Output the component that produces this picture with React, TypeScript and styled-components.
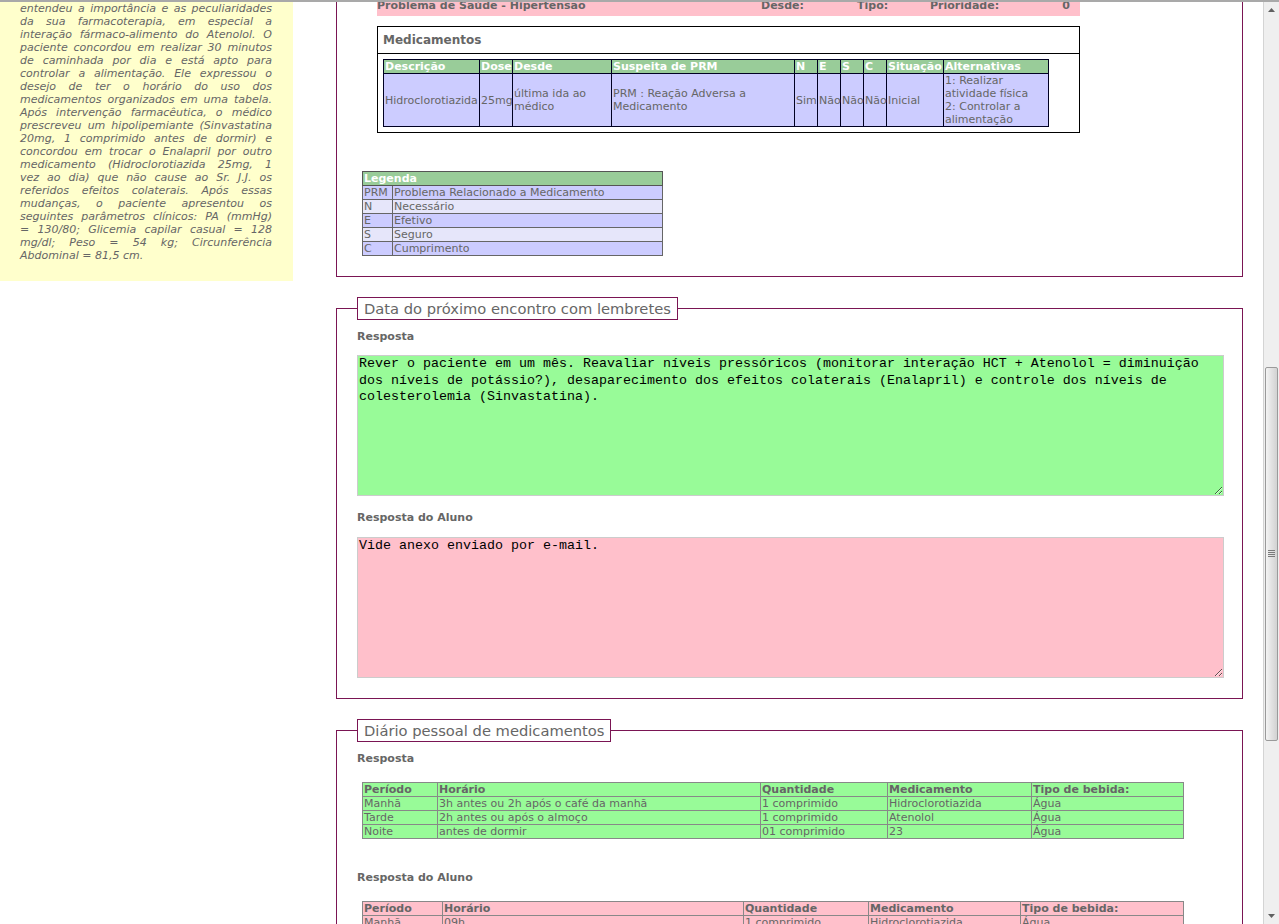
import React from 'react';
import styled, { createGlobalStyle } from 'styled-components';

const Global = createGlobalStyle`
  html, body { margin: 0; padding: 0; background: #fff; overflow: hidden; }
  body {
    font-family: "DejaVu Sans", Verdana, sans-serif;
    font-size: 11px;
    color: #666;
  }
  * { box-sizing: border-box; }
`;

const MAROON = '#7a1553';

const Window = styled.div`
  display: flex;
  width: 1279px;
  height: 924px;
  border-top: 2px solid #a9a9a9;
  overflow: hidden;
`;

const Viewport = styled.div`
  flex: 1;
  display: flex;
  align-items: flex-start;
  overflow: hidden;
`;

const Sidebar = styled.aside`
  flex: none;
  width: 293px;
  background: #ffffcc;
  padding: 0 21px 19px 20px;
  font-style: italic;
  line-height: 13px;
`;

const SideLine = styled.span<{ $last?: boolean }>`
  display: block;
  white-space: nowrap;
  text-align: justify;
  text-align-last: ${(p) => (p.$last ? 'left' : 'justify')};
`;

const Main = styled.main`
  flex: none;
  width: 907px;
  margin-left: 43px;
  display: flex;
  flex-direction: column;
`;

const Box = styled.fieldset<{ $cut?: boolean }>`
  margin: ${(p) => (p.$cut ? '0' : '20px 0 0')};
  min-width: 0;
  border: 1px solid ${MAROON};
  border-top: ${(p) => (p.$cut ? 'none' : `1px solid ${MAROON}`)};
  padding: 0 17px 20px 20px;
`;

const BoxLegend = styled.legend`
  border: 1px solid ${MAROON};
  padding: 0 6px;
  font-size: 14.7px;
  line-height: 21px;
  color: #666;
  background: #fff;
`;

const ProblemRow = styled.div`
  display: grid;
  grid-template-columns: 384px 96px 73px 1fr auto;
  width: 703px;
  height: 20px;
  margin: -6px 0 0 20px;
  padding-right: 10px;
  line-height: 20px;
  background: #ffc0cb;
  font-weight: bold;
`;

const MedBox = styled.div`
  width: 703px;
  margin: 10px 0 0 20px;
  border: 1px solid #000;
  padding-bottom: 5px;
`;

const MedTitle = styled.div`
  font-size: 12px;
  font-weight: bold;
  line-height: 26px;
  padding-left: 5px;
  border-bottom: 1px solid #000;
  margin-bottom: 5px;
`;

const DataTable = styled.table<{ $width: number; $ml: number; $mt?: number }>`
  border-collapse: collapse;
  table-layout: fixed;
  width: ${(p) => p.$width}px;
  margin: ${(p) => p.$mt ?? 0}px 0 0 ${(p) => p.$ml}px;
  font-size: 11px;
  line-height: 13px;
`;

const MedTh = styled.th`
  background: #99cc99;
  color: #fff;
  font-weight: bold;
  text-align: left;
  padding: 0 1px;
  border: 1px solid #000022;
  white-space: nowrap;
  overflow: hidden;
`;

const MedTd = styled.td`
  background: #ccccff;
  color: #666;
  padding: 0 1px;
  border: 1px solid #000022;
  vertical-align: middle;
`;

const LegTh = styled.th`
  background: #99cc99;
  color: #fff;
  font-weight: bold;
  text-align: left;
  padding: 0 1px;
  border: 1px solid #555;
`;

const LegTd = styled.td<{ $light?: boolean }>`
  background: ${(p) => (p.$light ? '#e6e6fa' : '#ccccff')};
  color: #666;
  padding: 0 1px;
  border: 1px solid #666;
  white-space: nowrap;
`;

const FieldLabel = styled.div<{ $mt: number; $mb: number }>`
  font-weight: bold;
  line-height: 13px;
  margin: ${(p) => p.$mt}px 0 ${(p) => p.$mb}px;
`;

const AnswerArea = styled.textarea<{ $tone: 'ok' | 'student' }>`
  display: block;
  width: 867px;
  height: 141px;
  margin: 0;
  padding: 0 1px;
  border: 1px solid #cccccc;
  background: ${(p) => (p.$tone === 'ok' ? '#98fb98' : '#ffc0cb')};
  color: #000;
  font-family: "Liberation Mono", "Courier New", monospace;
  font-size: 13.333px;
  line-height: 16.7px;
  resize: both;
  outline: none;
`;

const DiaryTable = styled.table<{ $tone: 'ok' | 'student' }>`
  border-collapse: collapse;
  table-layout: fixed;
  width: 821px;
  margin: 0 0 0 5px;
  border: 1px solid #333;
  background: ${(p) => (p.$tone === 'ok' ? '#98fb98' : '#ffc0cb')};
  font-size: 11px;
  line-height: 13px;
`;

const DiaryTh = styled.th`
  text-align: left;
  font-weight: bold;
  color: #666;
  padding: 0 1px;
  border: 1px solid #888;
  white-space: nowrap;
`;

const DiaryTd = styled.td`
  color: #666;
  padding: 0 1px;
  border: 1px solid #888;
  white-space: nowrap;
`;

const ScrollBar = styled.div`
  flex: none;
  width: 16px;
  height: 100%;
  display: flex;
  flex-direction: column;
  background: #efefef;
  border-left: 1px solid #d4d4d4;
`;

const ScrollArrow = styled.div`
  flex: none;
  height: 16px;
  display: flex;
  align-items: center;
  justify-content: center;
`;

const ScrollTrackArea = styled.div`
  flex: 1;
  display: flex;
  flex-direction: column;
`;

const ScrollThumb = styled.div<{ $top: number; $height: number }>`
  margin: ${(p) => p.$top}px 1px 0 1px;
  height: ${(p) => p.$height}px;
  border: 1px solid #9a9a9a;
  border-radius: 2px;
  background: linear-gradient(to right, #f4f4f4, #e2e2e2 50%, #d2d2d2);
  display: flex;
  align-items: center;
  justify-content: center;
`;

const sideLines = [
  'entendeu a importância e as peculiaridades',
  'da sua farmacoterapia, em especial a',
  'interação fármaco-alimento do Atenolol. O',
  'paciente concordou em realizar 30 minutos',
  'de caminhada por dia e está apto para',
  'controlar a alimentação. Ele expressou o',
  'desejo de ter o horário do uso dos',
  'medicamentos organizados em uma tabela.',
  'Após intervenção farmacêutica, o médico',
  'prescreveu um hipolipemiante (Sinvastatina',
  '20mg, 1 comprimido antes de dormir) e',
  'concordou em trocar o Enalapril por outro',
  'medicamento (Hidroclorotiazida 25mg, 1',
  'vez ao dia) que não cause ao Sr. J.J. os',
  'referidos efeitos colaterais. Após essas',
  'mudanças, o paciente apresentou os',
  'seguintes parâmetros clínicos: PA (mmHg)',
  '= 130/80; Glicemia capilar casual = 128',
  'mg/dl; Peso = 54 kg; Circunferência',
  'Abdominal = 81,5 cm.',
];

const legendRows: [string, string][] = [
  ['PRM', 'Problema Relacionado a Medicamento'],
  ['N', 'Necessário'],
  ['E', 'Efetivo'],
  ['S', 'Seguro'],
  ['C', 'Cumprimento'],
];

const diaryHead = ['Período', 'Horário', 'Quantidade', 'Medicamento', 'Tipo de bebida:'];

const diaryOk = [
  ['Manhã', '3h antes ou 2h após o café da manhã', '1 comprimido', 'Hidroclorotiazida', 'Água'],
  ['Tarde', '2h antes ou após o almoço', '1 comprimido', 'Atenolol', 'Água'],
  ['Noite', 'antes de dormir', '01 comprimido', '23', 'Água'],
];

const diaryStudent = [
  ['Manhã', '09h', '1 comprimido', 'Hidroclorotiazida', 'Água'],
  ['Tarde', '14h', '1 comprimido', 'Atenolol', 'Água'],
];

const answerText =
  'Rever o paciente em um mês. Reavaliar níveis pressóricos (monitorar interação HCT + Atenolol = diminuição dos níveis de potássio?), desaparecimento dos efeitos colaterais (Enalapril) e controle dos níveis de colesterolemia (Sinvastatina).';

function Diary({ tone, rows, cols }: { tone: 'ok' | 'student'; rows: string[][]; cols: number[] }) {
  return (
    <DiaryTable $tone={tone}>
      <colgroup>
        {cols.map((w, i) => (
          <col key={i} style={{ width: w }} />
        ))}
      </colgroup>
      <thead>
        <tr>
          {diaryHead.map((h) => (
            <DiaryTh key={h}>{h}</DiaryTh>
          ))}
        </tr>
      </thead>
      <tbody>
        {rows.map((r, i) => (
          <tr key={i}>
            {r.map((c, j) => (
              <DiaryTd key={j}>{c}</DiaryTd>
            ))}
          </tr>
        ))}
      </tbody>
    </DiaryTable>
  );
}

const medCols = [96, 33, 99, 183, 23, 23, 23, 23, 57, 105];

export default function App() {
  return (
    <>
      <Global />
      <Window>
        <Viewport>
          <Sidebar>
            {sideLines.map((l, i) => (
              <SideLine key={i} $last={i === sideLines.length - 1}>
                {l}
              </SideLine>
            ))}
          </Sidebar>
          <Main>
            <Box $cut>
              <ProblemRow>
                <span>Problema de Saúde - Hipertensão</span>
                <span>Desde:</span>
                <span>Tipo:</span>
                <span>Prioridade:</span>
                <span>0</span>
              </ProblemRow>
              <MedBox>
                <MedTitle>Medicamentos</MedTitle>
                <DataTable $width={665} $ml={5}>
                  <colgroup>
                    {medCols.map((w, i) => (
                      <col key={i} style={{ width: w }} />
                    ))}
                  </colgroup>
                  <thead>
                    <tr>
                      {['Descrição', 'Dose', 'Desde', 'Suspeita de PRM', 'N', 'E', 'S', 'C', 'Situação', 'Alternativas'].map(
                        (h) => (
                          <MedTh key={h}>{h}</MedTh>
                        )
                      )}
                    </tr>
                  </thead>
                  <tbody>
                    <tr>
                      <MedTd>Hidroclorotiazida</MedTd>
                      <MedTd>25mg</MedTd>
                      <MedTd>última ida ao médico</MedTd>
                      <MedTd>PRM : Reação Adversa a Medicamento</MedTd>
                      <MedTd>Sim</MedTd>
                      <MedTd>Não</MedTd>
                      <MedTd>Não</MedTd>
                      <MedTd>Não</MedTd>
                      <MedTd>Inicial</MedTd>
                      <MedTd>
                        1: Realizar atividade física
                        <br />
                        2: Controlar a alimentação
                      </MedTd>
                    </tr>
                  </tbody>
                </DataTable>
              </MedBox>
              <DataTable $width={300} $ml={5} $mt={38}>
                <colgroup>
                  <col style={{ width: 30 }} />
                  <col style={{ width: 270 }} />
                </colgroup>
                <thead>
                  <tr>
                    <LegTh colSpan={2}>Legenda</LegTh>
                  </tr>
                </thead>
                <tbody>
                  {legendRows.map(([k, v], i) => (
                    <tr key={k}>
                      <LegTd $light={i % 2 === 1}>{k}</LegTd>
                      <LegTd $light={i % 2 === 1}>{v}</LegTd>
                    </tr>
                  ))}
                </tbody>
              </DataTable>
            </Box>

            <Box>
              <BoxLegend>Data do próximo encontro com lembretes</BoxLegend>
              <FieldLabel $mt={10} $mb={12}>Resposta</FieldLabel>
              <AnswerArea $tone="ok" readOnly defaultValue={answerText} />
              <FieldLabel $mt={15} $mb={13}>Resposta do Aluno</FieldLabel>
              <AnswerArea $tone="student" readOnly defaultValue="Vide anexo enviado por e-mail." />
            </Box>

            <Box>
              <BoxLegend>Diário pessoal de medicamentos</BoxLegend>
              <FieldLabel $mt={10} $mb={17}>Resposta</FieldLabel>
              <Diary tone="ok" rows={diaryOk} cols={[75, 323, 127, 144, 152]} />
              <FieldLabel $mt={32} $mb={17}>Resposta do Aluno</FieldLabel>
              <Diary tone="student" rows={diaryStudent} cols={[80, 301, 125, 152, 163]} />
            </Box>
          </Main>
        </Viewport>
        <ScrollBar>
          <ScrollArrow>
            <svg width="7" height="4" viewBox="0 0 7 4">
              <path d="M0 4 L3.5 0 L7 4 Z" fill="#606060" />
            </svg>
          </ScrollArrow>
          <ScrollTrackArea>
            <ScrollThumb $top={349} $height={374}>
              <svg width="7" height="8" viewBox="0 0 7 8">
                <path d="M0 0.5H7M0 2.5H7M0 4.5H7M0 6.5H7" stroke="#7a7a7a" strokeWidth="1" />
              </svg>
            </ScrollThumb>
          </ScrollTrackArea>
          <ScrollArrow>
            <svg width="7" height="4" viewBox="0 0 7 4">
              <path d="M0 0 L3.5 4 L7 0 Z" fill="#606060" />
            </svg>
          </ScrollArrow>
        </ScrollBar>
      </Window>
    </>
  );
}
